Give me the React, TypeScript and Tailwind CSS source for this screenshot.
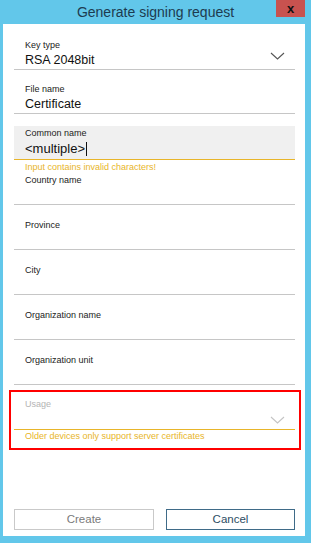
import React from 'react';

const font = { fontFamily: '"Liberation Sans", Arial, sans-serif' };

// Thin chevron used by the dropdown fields
const Chevron: React.FC<{ light?: boolean }> = ({ light }) => (
    <svg width="15" height="8" viewBox="0 0 15 8" className="shrink-0">
        <path
            d="M1 1 L7.5 7 L14 1"
            fill="none"
            stroke={light ? '#c4c4c4' : '#555555'}
            strokeWidth="1.1"
        />
    </svg>
);

// Plain text field: label, empty value row, grey underline
const Field: React.FC<{ label: string; value?: string; top?: string }> = ({
    label,
    value,
    top = 'mt-[14px]',
}) => (
    <div className={`${top} border-b border-[#c6c6c6] pl-[11px]`}>
        <div className="h-[12px] text-[9px] leading-[12px] text-[#222]">{label}</div>
        <div className="h-[18px] text-[12.5px] leading-[18px] text-[#111]">{value}</div>
    </div>
);

export default function App() {
    return (
        <div className="w-[311px] h-[543px] bg-[#62c7ea] flex flex-col" style={font}>
            {/* Title bar */}
            <div className="relative h-[24px] flex items-center justify-center">
                <span className="text-[14px] text-[#1d3b50]">Generate signing request</span>
                <div className="absolute right-[6px] top-0 w-[29px] h-[17px] bg-[#c8524f] flex items-center justify-center">
                    <span className="text-[13px] font-bold leading-none text-[#111] -mt-[1px]">x</span>
                </div>
            </div>

            {/* Dialog body */}
            <div className="ml-[3px] mr-[6px] h-[512px] bg-white flex flex-col">
                <div className="pl-[11px] pr-[10px] pt-[15px]">
                    {/* Key type */}
                    <div className="border-b border-[#c6c6c6] pl-[11px] pr-[10px]">
                        <div className="h-[12px] text-[9px] leading-[12px] text-[#222]">Key type</div>
                        <div className="h-[18px] flex items-center justify-between">
                            <span className="text-[12.5px] text-[#111]">RSA 2048bit</span>
                            <div className="-mt-[8px]"><Chevron /></div>
                        </div>
                    </div>

                    <Field label="File name" value="Certificate" top="mt-[13px]" />

                    {/* Common name (focused, invalid) */}
                    <div className="mt-[12px] bg-[#f0f0f0] border-b border-[#e8b52a] pl-[11px] pt-[1px]">
                        <div className="h-[12px] text-[9px] leading-[12px] text-[#222]">Common name</div>
                        <div className="h-[20px] flex items-center text-[13px] text-[#111]">
                            &lt;multiple&gt;
                            <span className="ml-[1px] w-[1px] h-[14px] bg-[#111]" />
                        </div>
                    </div>
                    <div className="h-[14px] pl-[11px] text-[9px] leading-[14px] text-[#e8b52a]">
                        Input contains invalid characters!
                    </div>

                    <Field label="Country name" top="mt-0" />
                    <Field label="Province" />
                    <Field label="City" />
                    <Field label="Organization name" />
                    <Field label="Organization unit" />
                </div>

                {/* Usage dropdown, highlighted */}
                <div className="mt-[5px] ml-[6px] mr-[4px] border-2 border-[#ff0000] pl-[3px] pr-[4px] pt-[6px] pb-[6px]">
                    <div className="border-b border-[#e8b52a] pl-[11px] pr-[10px]">
                        <div className="h-[12px] text-[9px] leading-[12px] text-[#b4b4b4]">Usage</div>
                        <div className="h-[19px] flex items-center justify-end">
                            <Chevron light />
                        </div>
                    </div>
                    <div className="h-[12px] pl-[11px] text-[9px] leading-[12px] text-[#e8b52a]">
                        Older devices only support server certificates
                    </div>
                </div>

                {/* Buttons */}
                <div className="mt-auto mb-[6px] pl-[11px] pr-[10px] flex gap-[12px]">
                    <button className="w-[140px] h-[21px] border border-[#c9c9c9] bg-white text-[11.5px] text-[#7a7a7a]">
                        Create
                    </button>
                    <button className="flex-1 h-[21px] border border-[#3f6b88] bg-white text-[11.5px] text-[#2d4d63]">
                        Cancel
                    </button>
                </div>
            </div>
        </div>
    );
}
